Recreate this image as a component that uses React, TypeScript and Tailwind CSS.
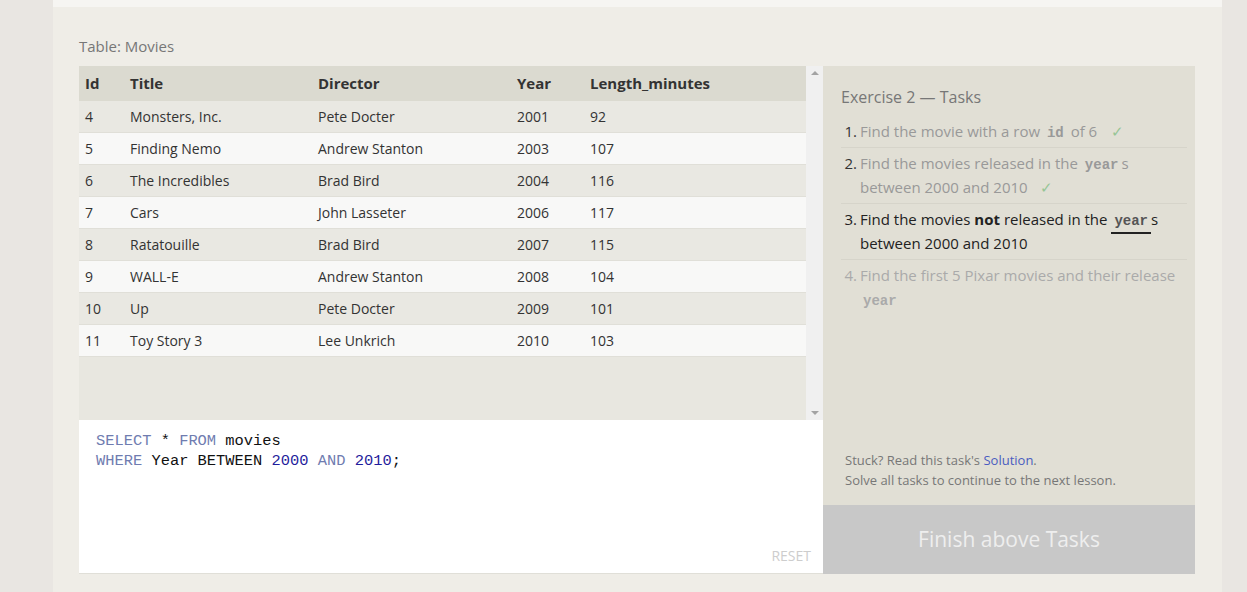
import React from "react";

const rows: [string, string, string, string, string][] = [
  ["4", "Monsters, Inc.", "Pete Docter", "2001", "92"],
  ["5", "Finding Nemo", "Andrew Stanton", "2003", "107"],
  ["6", "The Incredibles", "Brad Bird", "2004", "116"],
  ["7", "Cars", "John Lasseter", "2006", "117"],
  ["8", "Ratatouille", "Brad Bird", "2007", "115"],
  ["9", "WALL-E", "Andrew Stanton", "2008", "104"],
  ["10", "Up", "Pete Docter", "2009", "101"],
  ["11", "Toy Story 3", "Lee Unkrich", "2010", "103"],
];

const widths = ["w-[45px]", "w-[188px]", "w-[199px]", "w-[73px]", "flex-1"];

function Code({ children, className = "" }: { children: React.ReactNode; className?: string }) {
  return (
    <span
      className={"font-bold text-[14px] leading-none " + className}
      style={{ fontFamily: '"Liberation Mono", monospace' }}
    >
      {children}
    </span>
  );
}

export default function App() {
  return (
    <div
      className="w-full h-[592px] bg-[#e9e6e2] overflow-hidden flex"
      style={{ fontFamily: '"Open Sans", sans-serif' }}
    >
      <div className="ml-[53px] w-[1169px] h-full bg-[#efede7] flex flex-col">
        <div className="h-[7px] bg-[#f6f5f2]" />
        <div className="pl-[26px] pt-[29px] text-[15px] text-[#777] leading-[20px]">Table: Movies</div>
        <div className="flex pl-[26px] pt-[10px]">
          {/* left column */}
          <div className="w-[744px] flex flex-col">
            <div className="h-[354px] bg-[#e8e7e0] flex">
              <div className="flex-1 flex flex-col">
                <div className="h-[35px] bg-[#dbdad0] flex items-center text-[15px] font-bold text-[#333]">
                  {["Id", "Title", "Director", "Year", "Length_minutes"].map((h, i) => (
                    <div key={h} className={widths[i] + " pl-[6px]"}>
                      {h}
                    </div>
                  ))}
                </div>
                {rows.map((r, ri) => (
                  <div
                    key={ri}
                    className={
                      "h-[32px] flex items-center text-[14px] text-[#333] border-b border-[#e0dfd8] " +
                      (ri % 2 === 0 ? "bg-[#e9e8e2]" : "bg-[#f8f8f7]")
                    }
                  >
                    {r.map((c, ci) => (
                      <div key={ci} className={widths[ci] + " pl-[6px]"}>
                        {c}
                      </div>
                    ))}
                  </div>
                ))}
              </div>
              <div className="w-[17px] bg-[#f0f0f0] flex flex-col justify-between items-center py-[5px]">
                <div className="w-0 h-0 border-l-[4px] border-r-[4px] border-b-[4px] border-l-transparent border-r-transparent border-b-[#a3a3a3]" />
                <div className="w-0 h-0 border-l-[4px] border-r-[4px] border-t-[4px] border-l-transparent border-r-transparent border-t-[#a3a3a3]" />
              </div>
            </div>
            <div className="h-[154px] bg-white border-b border-[#e0dfd8] flex flex-col pl-[17px] pt-[11px] pr-[12px] pb-[8px]">
              <div
                className="text-[15.4px] leading-[20px] text-[#111] flex-1"
                style={{ fontFamily: '"Liberation Mono", monospace' }}
              >
                <div>
                  <span className="text-[#6f7cb0]">SELECT</span> * <span className="text-[#6f7cb0]">FROM</span> movies
                </div>
                <div>
                  <span className="text-[#6f7cb0]">WHERE</span> Year BETWEEN{" "}
                  <span className="text-[#1f1d9c]">2000</span> <span className="text-[#6f7cb0]">AND</span>{" "}
                  <span className="text-[#1f1d9c]">2010</span>;
                </div>
              </div>
              <div className="self-end text-[14px] text-[#cdcdcd] leading-[18px]">RESET</div>
            </div>
          </div>
          {/* right panel */}
          <div className="w-[372px] h-[508px] bg-[#e1dfd5] flex flex-col">
            <div className="flex-1 flex flex-col pl-[18px] pr-[8px] pt-[20px]">
              <div className="text-[16px] text-[#777] leading-[22px]">Exercise 2 — Tasks</div>
              <ol className="mt-[11px] text-[15px] leading-[24px]">
                <li className="flex border-b border-[#d6d4ca] pb-[4px]">
                  <span className="w-[19px] shrink-0 text-right pr-[3px] text-[#333]">1.</span>
                  <span className="text-[#999]">
                    Find the movie with a row <Code className="text-[#999] px-[3px]">id</Code> of 6{" "}
                    <span className="text-[#96c596] ml-[10px]">✓</span>
                  </span>
                </li>
                <li className="flex border-b border-[#d6d4ca] pt-[3px] pb-[4px]">
                  <span className="w-[19px] shrink-0 text-right pr-[3px] text-[#333]">2.</span>
                  <span className="text-[#999]">
                    Find the movies released in the <Code className="text-[#999] px-[3px]">year</Code>s between 2000
                    and 2010 <span className="text-[#96c596] ml-[8px]">✓</span>
                  </span>
                </li>
                <li className="flex border-b border-[#d6d4ca] pt-[3px] pb-[4px]">
                  <span className="w-[19px] shrink-0 text-right pr-[3px] text-[#222]">3.</span>
                  <span className="text-[#222]">
                    Find the movies <b>not</b> released in the{" "}
                    <Code className="text-[#555] px-[3px] border-b-2 border-[#222] pb-[3px]">year</Code>s between
                    2000 and 2010
                  </span>
                </li>
                <li className="flex pt-[3px]">
                  <span className="w-[19px] shrink-0 text-right pr-[3px] text-[#aaa]">4.</span>
                  <span className="text-[#aaa]">
                    Find the first 5 Pixar movies and their release <Code className="text-[#aaa] px-[3px]">year</Code>
                  </span>
                </li>
              </ol>
              <div className="flex-1" />
              <div className="text-[13px] leading-[20px] text-[#777] pl-[4px] pb-[15px]">
                <div>
                  Stuck? Read this task's <span className="text-[#4a5cc0]">Solution</span>.
                </div>
                <div>Solve all tasks to continue to the next lesson.</div>
              </div>
            </div>
            <div className="h-[69px] bg-[#c8c8c8] flex items-center justify-center text-[21px] text-[#eeeeee]">
              Finish above Tasks
            </div>
          </div>
        </div>
      </div>
    </div>
  );
}
